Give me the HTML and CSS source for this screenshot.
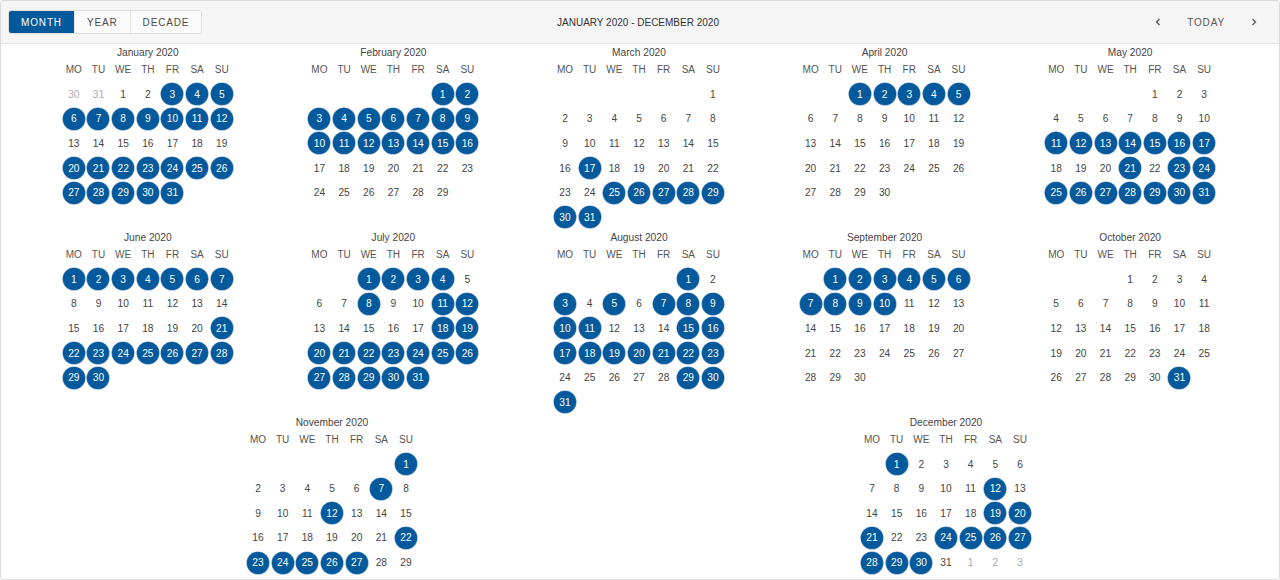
FILE: index.html
```html
<!DOCTYPE html>
<html lang="en">
<head>
<meta charset="utf-8">
<title>Year view</title>
<link rel="stylesheet" href="styles.css">
</head>
<body>
<div class="scheduler">
  <div class="toolbar">
    <div class="views">
      <div class="view active">Month</div>
      <div class="view">Year</div>
      <div class="view">Decade</div>
    </div>
    <div class="range">JANUARY 2020 - DECEMBER 2020</div>
    <div class="nav">
      <div class="nav-btn"><svg width="6" height="8" viewBox="0 0 6 8"><polyline points="4.5,1 1.5,4 4.5,7" fill="none" stroke="#555" stroke-width="1.3"/></svg></div>
      <div class="today">TODAY</div>
      <div class="nav-btn"><svg width="6" height="8" viewBox="0 0 6 8"><polyline points="1.5,1 4.5,4 1.5,7" fill="none" stroke="#555" stroke-width="1.3"/></svg></div>
    </div>
  </div>
  <div class="year" id="year"></div>
</div>
<script src="script.js"></script>
</body>
</html>
```

FILE: styles.css
```css
body {
  margin: 0;
  font-family: "Liberation Sans", Arial, sans-serif;
  background: #fff;
}

.scheduler {
  width: 1280px;
  height: 580px;
  box-sizing: border-box;
  border: 1px solid #dcdcdc;
  border-radius: 3px;
  overflow: hidden;
  background: #fff;
  display: flex;
  flex-direction: column;
}

.toolbar {
  flex: none;
  height: 42px;
  background: #f5f5f5;
  border-bottom: 1px solid #e3e3e3;
  display: grid;
  grid-template-columns: 1fr auto 1fr;
  align-items: center;
  padding: 0 11px 0 7px;
}

.views {
  justify-self: start;
  display: flex;
  height: 24px;
  box-sizing: border-box;
  border: 1px solid #dedede;
  border-radius: 3px;
  overflow: hidden;
}

.view {
  display: flex;
  align-items: center;
  padding: 0 12px;
  font-size: 10px;
  letter-spacing: 0.85px;
  text-transform: uppercase;
  color: #4a4a4a;
  background: #fbfbfb;
  border-left: 1px solid #e4e4e4;
}

.view:first-child {
  border-left: 0;
}

.view.active {
  background: #02599c;
  color: #fff;
}

.range {
  font-size: 10px;
  color: #333;
}

.nav {
  justify-self: end;
  display: flex;
  align-items: center;
  height: 24px;
}

.nav-btn {
  width: 28px;
  display: flex;
  justify-content: center;
  align-items: center;
}

.today {
  padding: 0 15px;
  font-size: 10px;
  letter-spacing: 0.85px;
  color: #555;
}

.year {
  flex: 1;
  display: flex;
  flex-wrap: wrap;
  align-content: flex-start;
  padding: 2px 26px 0 24px;
  overflow: hidden;
}

.month {
  flex: 1 0 19.9%;
  display: flex;
  flex-direction: column;
  align-items: center;
  margin-bottom: 1.4px;
}

.month-title {
  height: 14px;
  line-height: 14px;
  font-size: 10.2px;
  color: #444;
}

.grid {
  display: grid;
  grid-template-columns: repeat(7, 24.67px);
  grid-template-rows: 22px repeat(6, 24.6px);
}

.wd {
  font-size: 10px;
  line-height: 20px;
  text-align: center;
  color: #555;
}

.day {
  display: flex;
  align-items: center;
  justify-content: center;
  font-size: 10.2px;
  color: #444;
}

.day.other {
  color: #aaa;
}

.day.sel span {
  width: 22px;
  height: 22px;
  border-radius: 50%;
  background: #02599c;
  box-shadow: 0 0 0 0.6px #6f97c0;
  color: #fff;
  display: flex;
  align-items: center;
  justify-content: center;
}
```

FILE: script.js
```js
(function () {
  var names = ["January", "February", "March", "April", "May", "June",
    "July", "August", "September", "October", "November", "December"];
  var wds = ["MO", "TU", "WE", "TH", "FR", "SA", "SU"];
  function range(a, b) { var r = []; for (var i = a; i <= b; i++) r.push(i); return r; }
  var sel = [
    [3, 4, 5].concat(range(6, 12), range(20, 31)),
    range(1, 16),
    [17].concat(range(25, 31)),
    range(1, 5),
    range(11, 17).concat([21, 23, 24], range(25, 31)),
    range(1, 7).concat([21], range(22, 30)),
    [1, 2, 3, 4, 8, 11, 12, 18, 19].concat(range(20, 31)),
    [1, 3, 5, 7, 8, 9, 10, 11, 15, 16].concat(range(17, 23), [29, 30, 31]),
    range(1, 10),
    [31],
    [1, 7, 12, 22, 23, 24, 25, 26, 27],
    [1, 12, 19, 20, 21, 24, 25, 26, 27, 28, 29, 30]
  ];
  var root = document.getElementById("year");
  for (var m = 0; m < 12; m++) {
    var month = document.createElement("div");
    month.className = "month";
    var title = document.createElement("div");
    title.className = "month-title";
    title.textContent = names[m] + " 2020";
    month.appendChild(title);
    var grid = document.createElement("div");
    grid.className = "grid";
    wds.forEach(function (w) {
      var c = document.createElement("div");
      c.className = "wd";
      c.textContent = w;
      grid.appendChild(c);
    });
    var lead = (new Date(2020, m, 1).getDay() + 6) % 7;
    var days = new Date(2020, m + 1, 0).getDate();
    var prevDays = new Date(2020, m, 0).getDate();
    for (var i = 0; i < lead; i++) {
      var c = document.createElement("div");
      c.className = "day";
      if (m === 0) {
        c.className = "day other";
        c.innerHTML = "<span>" + (prevDays - lead + 1 + i) + "</span>";
      }
      grid.appendChild(c);
    }
    for (var d = 1; d <= days; d++) {
      var c = document.createElement("div");
      c.className = "day" + (sel[m].indexOf(d) >= 0 ? " sel" : "");
      c.innerHTML = "<span>" + d + "</span>";
      grid.appendChild(c);
    }
    if (m === 11) {
      var tail = (7 - (lead + days) % 7) % 7;
      for (var t = 1; t <= tail; t++) {
        var c = document.createElement("div");
        c.className = "day other";
        c.innerHTML = "<span>" + t + "</span>";
        grid.appendChild(c);
      }
    }
    month.appendChild(grid);
    root.appendChild(month);
  }
})();
```
